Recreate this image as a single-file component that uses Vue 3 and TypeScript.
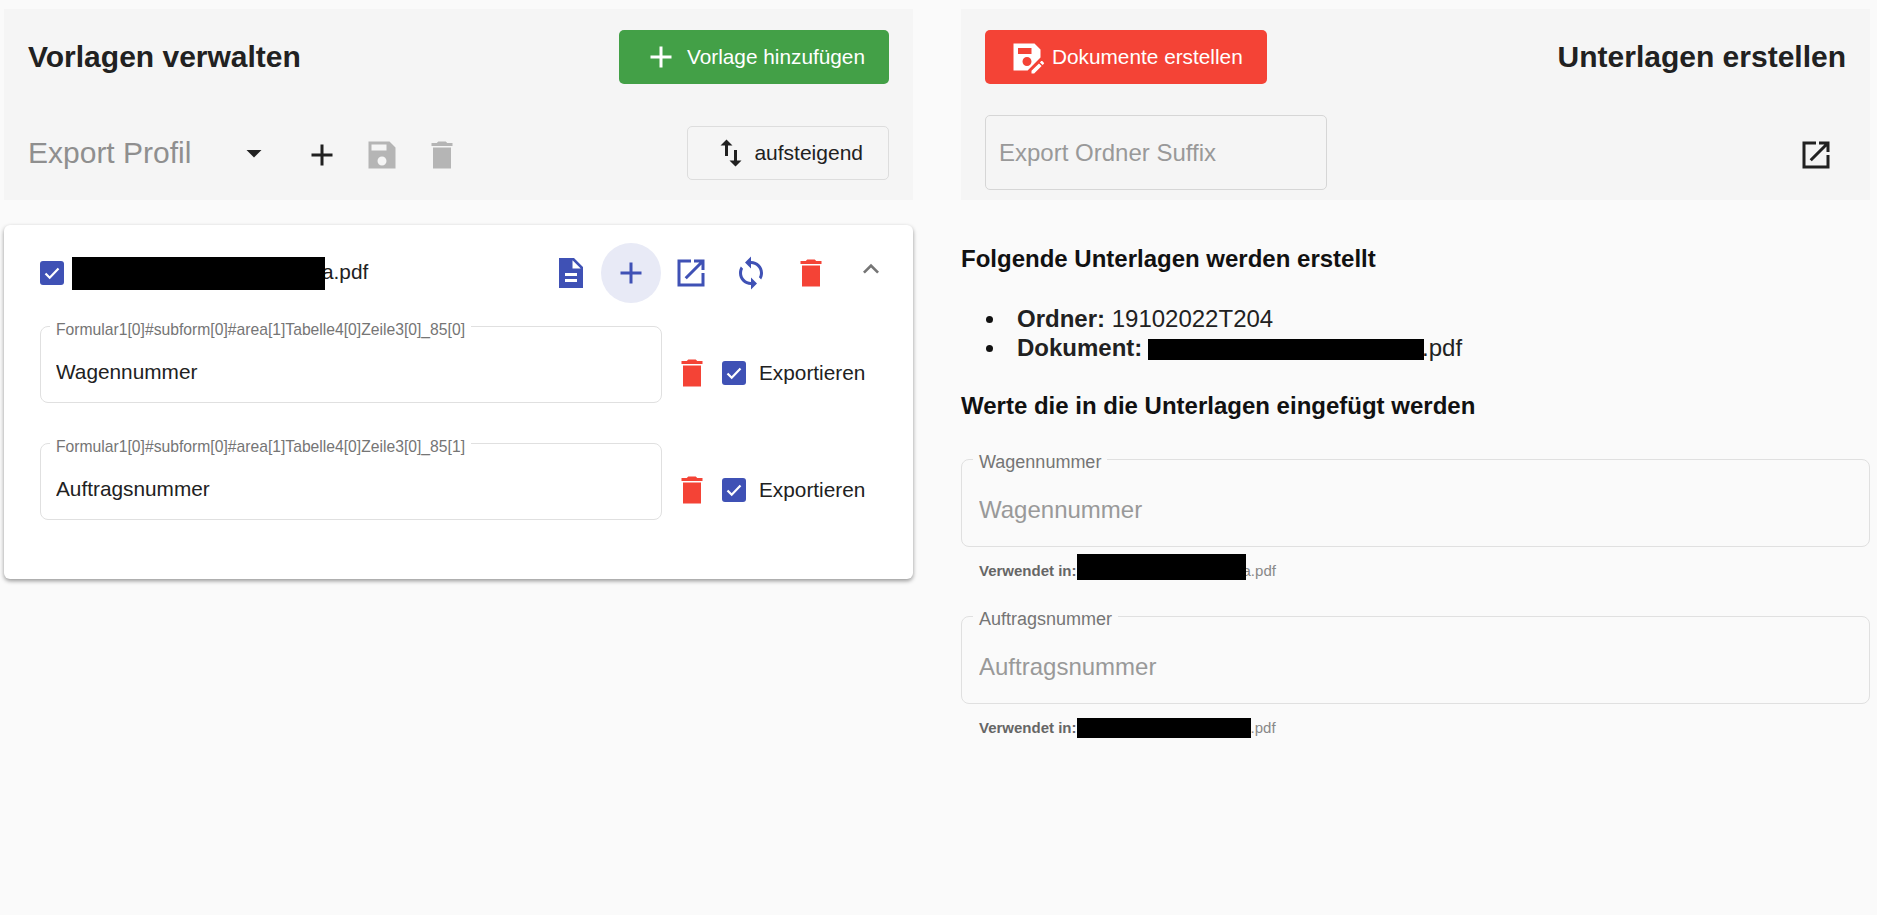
<script setup lang="ts">
const icons = {
  add: 'M19 13h-6v6h-2v-6H5v-2h6V5h2v6h6v2z',
  save: 'M17 3H3v18h18V7l-4-4zm-5 16c-1.66 0-3-1.34-3-3s1.34-3 3-3 3 1.34 3 3-1.34 3-3 3zm3-10H5V5h10v4z',
  saveAs: 'M21 12.4V7l-4-4H3v18h9.4l8.6-8.6zM15 15c0 1.66-1.34 3-3 3s-3-1.34-3-3 1.34-3 3-3 3 1.34 3 3zM6 6h9v4H6V6zm13.99 10.25 1.77 1.77L16.77 23H15v-1.77l4.99-4.98zm3.26.26-.85.85-1.77-1.77.85-.85c.2-.2.51-.2.71 0l1.06 1.06c.2.2.2.52 0 .71z',
  trash: 'M6 21h12V7H6v14zM19 4h-3.5l-1-1h-5l-1 1H5v2h14V4z',
  doc: 'M14 2H4v20h16V8l-6-6zm2 16H8v-2h8v2zm0-4H8v-2h8v2zm-3-5V3.5L18.5 9H13z',
  open: 'M19 19H5V5h7V3H3v18h18v-9h-2v7zM14 3v2h3.59l-9.83 9.83 1.41 1.41L19 6.41V10h2V3h-7z',
  sync: 'M12 4V1L8 5l4 4V6c3.31 0 6 2.69 6 6 0 1.01-.25 1.97-.7 2.8l1.46 1.46C19.54 15.03 20 13.57 20 12c0-4.42-3.58-8-8-8zm0 14c-3.31 0-6-2.69-6-6 0-1.01.25-1.97.7-2.8L5.24 7.74C4.46 8.97 4 10.43 4 12c0 4.42 3.58 8 8 8v3l4-4-4-4v3z',
  sort: 'M16 17.01V10h-2v7.01h-3L15 21l4-3.99h-3zM9 3L5 6.99h3V14h2V6.99h3L9 3z',
  less: 'M12 8l-6 6 1.41 1.41L12 10.83l4.59 4.58L18 14z',
  drop: 'M7 10l5 5 5-5z',
  check: 'M5.5 12.5l4.2 4.2 8.8-9.2',
}

const formFields = [
  { name: 'Formular1[0]#subform[0]#area[1]Tabelle4[0]Zeile3[0]_85[0]', value: 'Wagennummer' },
  { name: 'Formular1[0]#subform[0]#area[1]Tabelle4[0]Zeile3[0]_85[1]', value: 'Auftragsnummer' },
]

const values = [
  { label: 'Wagennummer', black: 169, suffix: 'a.pdf', blackH: 26, blackOffset: -6, overlap: -3 },
  { label: 'Auftragsnummer', black: 174, suffix: '.pdf', blackH: 20, blackOffset: 2, overlap: 0 },
]
</script>

<template>
  <div class="page">
    <section class="col">
      <header class="panel">
        <div class="row">
          <h1 class="title">Vorlagen verwalten</h1>
          <button class="btn btn--green">
            <svg class="icon" viewBox="0 0 24 24"><path :d="icons.add" /></svg>
            Vorlage hinzufügen
          </button>
        </div>
        <div class="row row--second">
          <div class="select">
            <span>Export Profil</span>
            <svg class="icon" viewBox="0 0 24 24"><path :d="icons.drop" /></svg>
          </div>
          <button class="icon-btn"><svg class="icon" viewBox="0 0 24 24"><path :d="icons.add" /></svg></button>
          <button class="icon-btn icon-btn--off"><svg class="icon" viewBox="0 0 24 24"><path :d="icons.save" /></svg></button>
          <button class="icon-btn icon-btn--off"><svg class="icon" viewBox="0 0 24 24"><path :d="icons.trash" /></svg></button>
          <button class="btn btn--outline">
            <svg class="icon" viewBox="0 0 24 24"><path :d="icons.sort" /></svg>
            aufsteigend
          </button>
        </div>
      </header>

      <article class="card">
        <div class="card__head">
          <svg class="checkbox" viewBox="0 0 24 24"><rect width="24" height="24" rx="3" /><path :d="icons.check" /></svg>
          <span class="black black--title"></span>
          <span class="card__name">a.pdf</span>
          <button class="icon-btn icon-btn--blue"><svg class="icon" viewBox="0 0 24 24"><path :d="icons.doc" /></svg></button>
          <button class="icon-btn icon-btn--blue icon-btn--active"><svg class="icon" viewBox="0 0 24 24"><path :d="icons.add" /></svg></button>
          <button class="icon-btn icon-btn--blue"><svg class="icon" viewBox="0 0 24 24"><path :d="icons.open" /></svg></button>
          <button class="icon-btn icon-btn--blue"><svg class="icon" viewBox="0 0 24 24"><path :d="icons.sync" /></svg></button>
          <button class="icon-btn icon-btn--red"><svg class="icon" viewBox="0 0 24 24"><path :d="icons.trash" /></svg></button>
          <button class="icon-btn icon-btn--less"><svg class="icon" viewBox="0 0 24 24"><path :d="icons.less" /></svg></button>
        </div>

        <div v-for="field in formFields" :key="field.name" class="field-row">
          <fieldset class="field">
            <legend>{{ field.name }}</legend>
            <input :value="field.value" />
          </fieldset>
          <div class="field-row__actions">
            <svg class="icon icon--red" viewBox="0 0 24 24"><path :d="icons.trash" /></svg>
            <svg class="checkbox" viewBox="0 0 24 24"><rect width="24" height="24" rx="3" /><path :d="icons.check" /></svg>
            <span class="field-row__label">Exportieren</span>
          </div>
        </div>
      </article>
    </section>

    <section class="col">
      <header class="panel">
        <div class="row">
          <button class="btn btn--red">
            <svg class="icon" viewBox="0 0 24 24"><path :d="icons.saveAs" /></svg>
            Dokumente erstellen
          </button>
          <h1 class="title">Unterlagen erstellen</h1>
        </div>
        <div class="row row--suffix">
          <input class="suffix" placeholder="Export Ordner Suffix" />
          <button class="icon-btn icon-btn--export"><svg class="icon" viewBox="0 0 24 24"><path :d="icons.open" /></svg></button>
        </div>
      </header>

      <h2 class="subtitle subtitle--first">Folgende Unterlagen werden erstellt</h2>
      <ul class="summary">
        <li><strong>Ordner:</strong> 19102022T204</li>
        <li><strong>Dokument:</strong> <span class="black black--doc"></span>.pdf</li>
      </ul>
      <h2 class="subtitle">Werte die in die Unterlagen eingefügt werden</h2>

      <div v-for="item in values" :key="item.label" class="value">
        <fieldset class="field field--large">
          <legend>{{ item.label }}</legend>
          <input :placeholder="item.label" />
        </fieldset>
        <div class="value__note">
          <strong>Verwendet in:</strong>
          <span class="black" :style="{ width: item.black + 'px', height: item.blackH + 'px', marginTop: item.blackOffset + 'px', marginRight: item.overlap + 'px' }"></span>
          <span>{{ item.suffix }}</span>
        </div>
      </div>
    </section>
  </div>
</template>

<style scoped>
.page {
  display: grid;
  grid-template-columns: 909px 909px;
  column-gap: 48px;
  padding: 9px 7px 0 4px;
  min-height: 906px;
  box-sizing: border-box;
  background: #fafafa;
  color: #212121;
  font-family: 'Liberation Sans', Arial, sans-serif;
}

.panel {
  height: 191px;
  box-sizing: border-box;
  padding: 21px 24px 0;
  background: #f5f5f5;
}

.row {
  display: flex;
  align-items: center;
  justify-content: space-between;
}

.row--second {
  align-items: flex-start;
  justify-content: flex-start;
  margin-top: 42px;
}

.row--suffix {
  margin-top: 31px;
}

.title {
  margin: 0;
  font-size: 30px;
  font-weight: 700;
}

.btn {
  display: flex;
  align-items: center;
  gap: 7px;
  height: 54px;
  padding: 0 24px;
  box-sizing: border-box;
  border: none;
  border-radius: 5px;
  font-family: inherit;
  font-size: 20.8px;
  cursor: pointer;
}

.btn--green {
  gap: 8px;
  background: #43a047;
  color: #fff;
}

.btn--red {
  background: #f44336;
  color: #fff;
}

.btn--outline {
  margin-left: auto;
  gap: 5px;
  padding: 0 25px;
  border: 1px solid #ddd;
  background: #f5f5f5;
  color: #212121;
  font-size: 21px;
}

.icon {
  width: 36px;
  height: 36px;
  flex: none;
  fill: currentColor;
}

.icon--red {
  color: #f44336;
}

.select {
  display: flex;
  align-items: center;
  justify-content: space-between;
  width: 264px;
  height: 54px;
  padding-right: 20px;
  box-sizing: border-box;
  font-size: 30px;
  color: #8f8f8f;
}

.select .icon {
  color: #212121;
}

.icon-btn {
  display: flex;
  align-items: center;
  justify-content: center;
  width: 60px;
  height: 60px;
  flex: none;
  padding: 0;
  border: none;
  border-radius: 50%;
  background: transparent;
  color: #212121;
  cursor: pointer;
}

.row--second .icon-btn {
  margin-top: -1px;
}

.icon-btn--off {
  color: #b5b5b5;
}

.icon-btn--blue {
  color: #3f51b5;
}

.icon-btn--active {
  background: #e8eaf6;
}

.icon-btn--red {
  color: #f44336;
}

.icon-btn--less {
  height: 52px;
  align-self: flex-start;
  color: #757575;
}

.icon-btn--less .icon {
  width: 32px;
  height: 32px;
}

.icon-btn--export {
  margin-top: 4px;
}

.card {
  margin-top: 25px;
  height: 354px;
  box-sizing: border-box;
  padding: 18px 12px 0 36px;
  border-radius: 6px;
  background: #fff;
  box-shadow: 0 2px 4px rgba(0, 0, 0, 0.4);
}

.card__head {
  display: flex;
  align-items: center;
  margin-bottom: 11px;
}

.checkbox {
  width: 24px;
  height: 24px;
  flex: none;
}

.checkbox rect {
  fill: #3f51b5;
}

.checkbox path {
  fill: none;
  stroke: #fff;
  stroke-width: 2.2;
}

.black {
  display: inline-block;
  position: relative;
  background: #000;
  flex: none;
}

.black--title {
  width: 253px;
  height: 33px;
  margin-left: 8px;
}

.black--doc {
  width: 276px;
  height: 21px;
  margin: 0 -2px -4px -1px;
}

.card__name {
  flex: 1;
  margin: -2px 0 0 -3px;
  font-size: 20.8px;
}

.field-row {
  display: flex;
  align-items: center;
  gap: 12px;
  margin-bottom: 28px;
}

.field {
  flex: 1;
  min-width: 0;
  margin: 0;
  padding: 0 15px;
  border: 1px solid #e0e0e0;
  border-radius: 8px;
}

.field legend {
  margin-left: -6px;
  padding: 8px 6px 0;
  font-size: 15.7px;
  line-height: 16px;
  color: #757575;
}

.field input {
  display: block;
  width: 100%;
  height: 64px;
  padding: 4px 0 0;
  box-sizing: border-box;
  border: none;
  outline: none;
  background: transparent;
  font-family: inherit;
  font-size: 20.8px;
  color: #212121;
}

.field--large {
  padding: 0 17px;
}

.field--large legend {
  padding-top: 6px;
  font-size: 18px;
  line-height: 20px;
}

.field--large input {
  height: 74px;
  padding-top: 2px;
  font-size: 24px;
}

.field input::placeholder,
.suffix::placeholder {
  color: #999;
  opacity: 1;
}

.field-row__actions {
  display: flex;
  align-items: center;
  width: 227px;
  padding-top: 28px;
}

.field-row__actions .checkbox {
  margin-left: 12px;
}

.field-row__label {
  margin-left: 13px;
  font-size: 20.8px;
}

.suffix {
  width: 342px;
  height: 75px;
  padding: 0 13px;
  box-sizing: border-box;
  border: 1px solid #d6d6d6;
  border-radius: 5px;
  outline: none;
  background: transparent;
  font-family: inherit;
  font-size: 24px;
}

.subtitle {
  margin: 0;
  font-size: 24px;
  font-weight: 700;
  color: #111;
}

.subtitle--first {
  margin-top: 45px;
}

.summary {
  margin: 31px 0 30px;
  padding-left: 56px;
  list-style: none;
  font-size: 24px;
  line-height: 29px;
}

.summary li::before {
  content: '';
  display: inline-block;
  width: 7px;
  height: 7px;
  margin: 0 24px 2px -31px;
  border-radius: 50%;
  background: #111;
  vertical-align: middle;
}

.value {
  margin-top: 26px;
}

.value + .value {
  margin-top: 20px;
}

.value__note {
  display: flex;
  align-items: center;
  height: 26px;
  margin-top: 10px;
  padding-left: 18px;
  font-size: 15px;
  color: #888;
}

.value__note strong {
  color: #666;
}
</style>

<style>
html,
body {
  background: #fafafa;
}
</style>
